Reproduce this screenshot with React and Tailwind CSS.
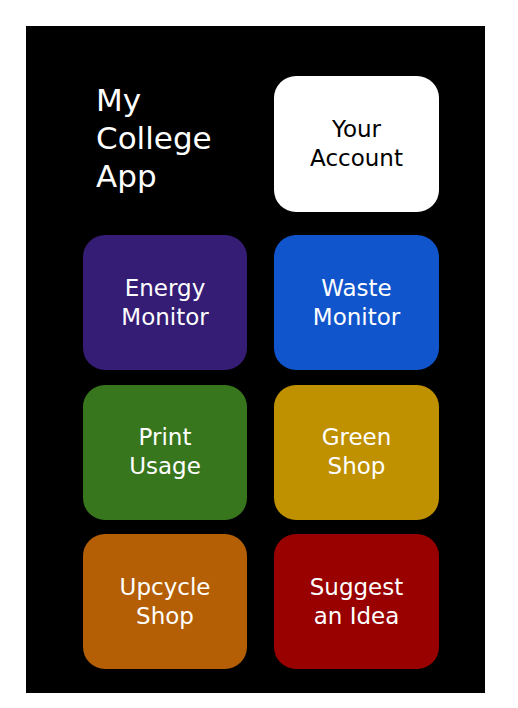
import React from 'react';

const tiles = [
    { label: ['Energy', 'Monitor'], bg: 'bg-[#351c75]' },
    { label: ['Waste', 'Monitor'], bg: 'bg-[#1155cc]' },
    { label: ['Print', 'Usage'], bg: 'bg-[#38761d]' },
    { label: ['Green', 'Shop'], bg: 'bg-[#bf9000]' },
    { label: ['Upcycle', 'Shop'], bg: 'bg-[#b45f06]' },
    { label: ['Suggest', 'an Idea'], bg: 'bg-[#990000]' },
];

const Tile = ({ label, bg, dark }) => (
    <button
        className={`h-full min-h-[135px] rounded-[22px] flex flex-col items-center justify-center text-[23px] leading-[29px] ${bg} ${dark ? 'text-black' : 'text-white'}`}
    >
        {label.map((line) => (
            <span key={line}>{line}</span>
        ))}
    </button>
);

const App = () => {
    return (
        <div className="min-h-screen bg-white pt-[26px] pl-[26px]" style={{ fontFamily: '"DejaVu Sans", sans-serif' }}>
            <div className="w-[459px] h-[667px] bg-black pt-[50px] pl-[57px]">
                <div className="grid grid-cols-[164px_165px] h-[136px] gap-x-[27px] mb-[23px]">
                    <h1 className="pl-[13px] pt-[5px] text-white text-[31px] leading-[38px] font-normal">
                        My<br />College<br />App
                    </h1>
                    <Tile label={['Your', 'Account']} bg="bg-white" dark />
                </div>
                <div className="grid grid-cols-[164px_165px] gap-x-[27px] gap-y-[14.5px]">
                    {tiles.map((t) => (
                        <Tile key={t.label.join(' ')} label={t.label} bg={t.bg} />
                    ))}
                </div>
            </div>
        </div>
    );
};

export default App;
